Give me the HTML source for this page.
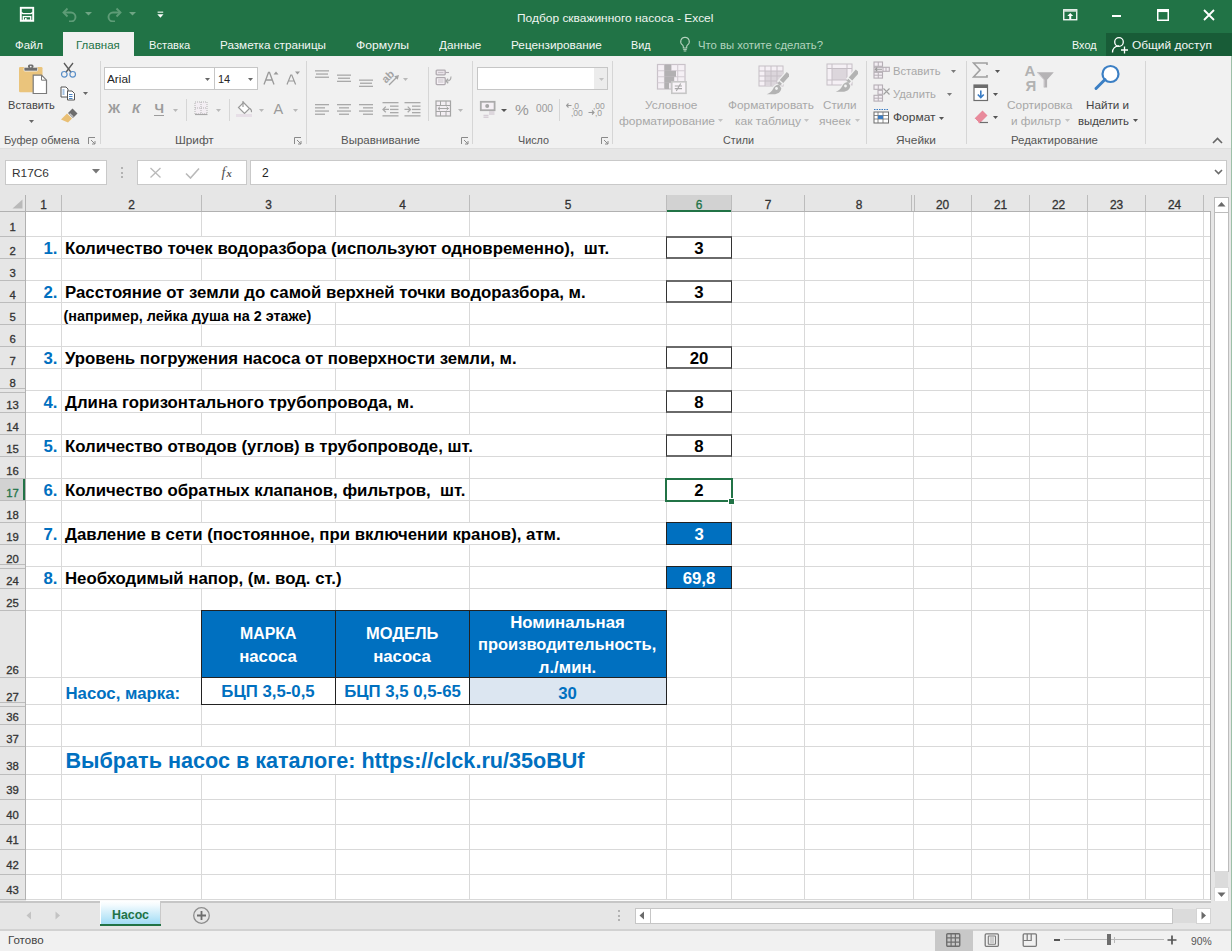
<!DOCTYPE html><html><head><meta charset="utf-8"><style>
html,body{margin:0;padding:0;}
body{width:1232px;height:951px;overflow:hidden;position:relative;font-family:"Liberation Sans",sans-serif;background:#fff;}
div,svg{box-sizing:border-box;}
</style></head><body>
<div style="position:absolute;left:0px;top:0px;width:1232px;height:56px;background:#217346"></div>
<div style="position:absolute;left:516.5px;top:18.28px;height:0;line-height:0;white-space:nowrap;font-size:11.6px;color:#f0f5f1;font-weight:normal;transform:scaleX(1.0302);transform-origin:0 0;">Подбор скважинного насоса - Excel</div>
<svg style="position:absolute;left:19px;top:6px;" width="16" height="16" viewBox="0 0 16 16"><rect x="1.8" y="1.8" width="12.4" height="13" fill="none" stroke="#fff" stroke-width="1.9"/><path d="M2.5 6.2Q3 7.6 4.5 7.6H11.5Q13 7.6 13.5 6.2" fill="none" stroke="#fff" stroke-width="1.4"/><rect x="4.3" y="10.6" width="7.4" height="3.6" fill="none" stroke="#fff" stroke-width="1.3"/><rect x="6" y="12" width="1.6" height="2.5" fill="#fff"/></svg>
<svg style="position:absolute;left:61px;top:6px;" width="18" height="16" viewBox="0 0 18 16"><path d="M3 6.5h7a4.5 4.5 0 0 1 0 9h-2" fill="none" stroke="#5e9c77" stroke-width="1.9"/><path d="M6.5 2.5l-4 4 4 4" fill="none" stroke="#5e9c77" stroke-width="1.9"/></svg>
<svg style="position:absolute;left:85px;top:12px;" width="7" height="4" viewBox="0 0 7 4"><path d="M0 0h7l-3.5 3.5z" fill="#6fa584"/></svg>
<svg style="position:absolute;left:105px;top:6px;" width="18" height="16" viewBox="0 0 18 16"><path d="M15 6.5h-7a4.5 4.5 0 0 0 0 9h2" fill="none" stroke="#5e9c77" stroke-width="1.9"/><path d="M11.5 2.5l4 4-4 4" fill="none" stroke="#5e9c77" stroke-width="1.9"/></svg>
<svg style="position:absolute;left:129px;top:12px;" width="7" height="4" viewBox="0 0 7 4"><path d="M0 0h7l-3.5 3.5z" fill="#6fa584"/></svg>
<svg style="position:absolute;left:157px;top:10.5px;" width="7" height="8" viewBox="0 0 7 8"><rect x="0.6" y="0.5" width="5.6" height="1.4" fill="#c7dfcf"/><path d="M0.3 3.3h6.2L3.4 6.8z" fill="#fff"/></svg>
<svg style="position:absolute;left:1063px;top:9px;" width="15" height="12" viewBox="0 0 15 12"><rect x="0.75" y="0.75" width="13" height="10" fill="none" stroke="#fff" stroke-width="1.3"/><rect x="0.75" y="0.75" width="13" height="2" fill="#cfe0d5"/><path d="M7.25 4l-3 3h2v3.5h2V7h2z" fill="#fff"/></svg>
<div style="position:absolute;left:1112px;top:15px;width:9px;height:2px;background:#fff"></div>
<svg style="position:absolute;left:1157px;top:9px;" width="12" height="12" viewBox="0 0 12 12"><rect x="0.75" y="0.75" width="10.5" height="10.5" fill="none" stroke="#fff" stroke-width="1.5"/><rect x="0.75" y="0.75" width="10.5" height="2.3" fill="#fff"/></svg>
<svg style="position:absolute;left:1203px;top:9px;" width="12" height="12" viewBox="0 0 12 12"><path d="M1 1L11 11M11 1L1 11" stroke="#fff" stroke-width="1.8"/></svg>
<div style="position:absolute;left:63px;top:32px;width:71px;height:25px;background:#f1f1f1"></div>
<div style="position:absolute;left:15px;top:44.51px;height:0;line-height:0;white-space:nowrap;font-size:11.8px;color:#f4f8f5;font-weight:normal;transform:scaleX(0.9652);transform-origin:0 0;">Файл</div>
<div style="position:absolute;left:75.6px;top:44.51px;height:0;line-height:0;white-space:nowrap;font-size:11.8px;color:#217346;font-weight:normal;transform:scaleX(0.9752);transform-origin:0 0;">Главная</div>
<div style="position:absolute;left:148.75px;top:44.51px;height:0;line-height:0;white-space:nowrap;font-size:11.8px;color:#f4f8f5;font-weight:normal;transform:scaleX(0.9406);transform-origin:0 0;">Вставка</div>
<div style="position:absolute;left:220px;top:44.51px;height:0;line-height:0;white-space:nowrap;font-size:11.8px;color:#f4f8f5;font-weight:normal;transform:scaleX(0.9902);transform-origin:0 0;">Разметка страницы</div>
<div style="position:absolute;left:356px;top:44.51px;height:0;line-height:0;white-space:nowrap;font-size:11.8px;color:#f4f8f5;font-weight:normal;transform:scaleX(1.0322);transform-origin:0 0;">Формулы</div>
<div style="position:absolute;left:438.75px;top:44.51px;height:0;line-height:0;white-space:nowrap;font-size:11.8px;color:#f4f8f5;font-weight:normal;transform:scaleX(0.9911);transform-origin:0 0;">Данные</div>
<div style="position:absolute;left:511px;top:44.51px;height:0;line-height:0;white-space:nowrap;font-size:11.8px;color:#f4f8f5;font-weight:normal;transform:scaleX(0.9977);transform-origin:0 0;">Рецензирование</div>
<div style="position:absolute;left:631px;top:44.51px;height:0;line-height:0;white-space:nowrap;font-size:11.8px;color:#f4f8f5;font-weight:normal;transform:scaleX(0.9135);transform-origin:0 0;">Вид</div>
<svg style="position:absolute;left:679px;top:36px;" width="12" height="16" viewBox="0 0 12 16"><path d="M6 1.2a4.3 4.3 0 0 0-2.6 7.7c.6.5.9 1.1.9 1.8v1.3h3.4v-1.3c0-.7.3-1.3.9-1.8A4.3 4.3 0 0 0 6 1.2z" fill="none" stroke="#b5d3bf" stroke-width="1.1"/><path d="M4.2 13.6h3.6M4.7 15h2.6" stroke="#b5d3bf" stroke-width="1"/></svg>
<div style="position:absolute;left:697.5px;top:44.51px;height:0;line-height:0;white-space:nowrap;font-size:11.8px;color:#b3d3be;font-weight:normal;transform:scaleX(0.9583);transform-origin:0 0;">Что вы хотите сделать?</div>
<div style="position:absolute;left:1071.5px;top:44.51px;height:0;line-height:0;white-space:nowrap;font-size:11.8px;color:#f4f8f5;font-weight:normal;transform:scaleX(0.9179);transform-origin:0 0;">Вход</div>
<div style="position:absolute;left:1106px;top:33px;width:126px;height:23px;background:#185c37"></div>
<svg style="position:absolute;left:1111px;top:36px;" width="19" height="18" viewBox="0 0 19 18"><circle cx="8" cy="6" r="4.3" fill="none" stroke="#fff" stroke-width="1.3"/><path d="M1.5 16.5c0-4 2.8-6.5 6.5-6.5" fill="none" stroke="#fff" stroke-width="1.3"/><path d="M13.5 10.5v7M10 14h7" stroke="#fff" stroke-width="1.3"/></svg>
<div style="position:absolute;left:1132px;top:44.51px;height:0;line-height:0;white-space:nowrap;font-size:11.8px;color:#f4f8f5;font-weight:normal;transform:scaleX(1.0091);transform-origin:0 0;">Общий доступ</div>
<div style="position:absolute;left:0px;top:56px;width:1232px;height:93px;background:#f1f1f1;border-bottom:1px solid #dedede"></div>
<svg style="position:absolute;left:18px;top:63px;" width="30" height="32" viewBox="0 0 30 32"><rect x="1" y="4" width="23.5" height="25.3" rx="1.2" fill="#eac47c"/><rect x="6" y="4.3" width="13.6" height="3.8" rx="1" fill="#6d6d6d" stroke="#f1f1f1" stroke-width="0.8"/><rect x="10" y="1.5" width="5.5" height="3.5" rx="1.5" fill="#6d6d6d"/><circle cx="12.75" cy="3.6" r="0.9" fill="#f1f1f1"/><path d="M15.2 12.2h8.3l5 5v13.3h-13.3z" fill="#fff" stroke="#7a7a7a" stroke-width="1.2"/><path d="M23.5 12.2v5h5" fill="none" stroke="#7a7a7a" stroke-width="1"/></svg>
<div style="position:absolute;left:7.5px;top:104.98px;height:0;line-height:0;white-space:nowrap;font-size:11.6px;color:#444444;font-weight:normal;transform:scaleX(0.9539);transform-origin:0 0;">Вставить</div>
<svg style="position:absolute;left:29px;top:120px;" width="5" height="3" viewBox="0 0 5 3"><path d="M0 0h5l-2.5 3z" fill="#676767"/></svg>
<svg style="position:absolute;left:60px;top:62px;" width="17" height="16" viewBox="0 0 17 16"><path d="M4 1l7.2 9.5M13 1L5.8 10.5" stroke="#5a5a5a" stroke-width="1.3"/><circle cx="4.3" cy="12.3" r="2.8" fill="none" stroke="#5a8fc8" stroke-width="1.2"/><circle cx="12.7" cy="12.3" r="2.8" fill="none" stroke="#5a8fc8" stroke-width="1.2"/></svg>
<svg style="position:absolute;left:60px;top:86px;" width="17" height="15" viewBox="0 0 17 15"><path d="M1 1h5l2 2v8H1z" fill="#fff" stroke="#555" stroke-width="1"/><path d="M7.5 5h4.5l2.5 2.5v6.5h-7z" fill="#fff" stroke="#555" stroke-width="1"/><path d="M2.5 4h2M2.5 6h2M2.5 8h2M9 8.5h3.5M9 10.5h3.5M9 12.5h3.5" stroke="#4a84c4" stroke-width="1"/></svg>
<svg style="position:absolute;left:83px;top:92px;" width="5" height="3" viewBox="0 0 5 3"><path d="M0 0h5l-2.5 3z" fill="#676767"/></svg>
<svg style="position:absolute;left:60px;top:108px;" width="18" height="16" viewBox="0 0 18 16"><path d="M1 11.5l6-6 5 5-4 4z" fill="#e9bf74"/><path d="M8 5l4.5-4.5 5 5L13 10z" fill="#6d6d6d"/><path d="M9.8 5.5l3.7 3.5" stroke="#f1f1f1" stroke-width="1"/></svg>
<div style="position:absolute;left:3.5px;top:140.08px;height:0;line-height:0;white-space:nowrap;font-size:11.6px;color:#555555;font-weight:normal;transform:scaleX(0.9579);transform-origin:0 0;">Буфер обмена</div>
<svg style="position:absolute;left:87.5px;top:137px;" width="8" height="8" viewBox="0 0 8 8"><path d="M0.5 7V0.5H7" fill="none" stroke="#8a8a8a" stroke-width="1"/><path d="M3 3l4 4M7 4v3H4" fill="none" stroke="#8a8a8a" stroke-width="1"/></svg>
<div style="position:absolute;left:100px;top:61px;width:1px;height:83px;background:#d6d6d6"></div>
<div style="position:absolute;left:104px;top:67px;width:111px;height:23px;background:#fff;border:1px solid #c6c6c6"></div>
<div style="position:absolute;left:214px;top:67px;width:44px;height:23px;background:#fff;border:1px solid #c6c6c6"></div>
<div style="position:absolute;left:107px;top:78.98px;height:0;line-height:0;white-space:nowrap;font-size:11.6px;color:#262626;font-weight:normal;transform:scaleX(1.0170);transform-origin:0 0;">Arial</div>
<svg style="position:absolute;left:205px;top:78px;" width="5" height="3" viewBox="0 0 5 3"><path d="M0 0h5l-2.5 3z" fill="#676767"/></svg>
<div style="position:absolute;left:218px;top:79.20px;height:0;line-height:0;white-space:nowrap;font-size:10.97px;color:#262626;font-weight:normal;">14</div>
<svg style="position:absolute;left:247.5px;top:78px;" width="5" height="3" viewBox="0 0 5 3"><path d="M0 0h5l-2.5 3z" fill="#676767"/></svg>
<svg style="position:absolute;left:263px;top:70px;" width="16" height="16" viewBox="0 0 16 16"><path d="M1 14.5L5.5 2.5h1L11 14.5M3 10h6" fill="none" stroke="#9a9a9a" stroke-width="1.3"/><path d="M10.5 4.5l2.5-3 2.5 3z" fill="#9a9a9a"/></svg>
<svg style="position:absolute;left:286px;top:70px;" width="15" height="16" viewBox="0 0 15 16"><path d="M1 14.5L4.8 5h1L9.6 14.5M2.6 11h5.6" fill="none" stroke="#9a9a9a" stroke-width="1.2"/><path d="M9 1.5h5l-2.5 3z" fill="#9a9a9a"/></svg>
<div style="position:absolute;left:108px;top:108.82px;height:0;line-height:0;white-space:nowrap;font-size:13.5px;color:#9c9c9c;font-weight:bold;">Ж</div>
<div style="position:absolute;left:132px;top:108.82px;height:0;line-height:0;white-space:nowrap;font-size:13.5px;color:#9c9c9c;font-weight:bold;font-style:italic">К</div>
<div style="position:absolute;left:154.5px;top:108.82px;height:0;line-height:0;white-space:nowrap;font-size:13.5px;color:#9c9c9c;font-weight:bold;">Ч</div>
<div style="position:absolute;left:154px;top:115px;width:10px;height:1px;background:#9c9c9c"></div>
<svg style="position:absolute;left:172.5px;top:109px;" width="5" height="3" viewBox="0 0 5 3"><path d="M0 0h5l-2.5 3z" fill="#b9b9b9"/></svg>
<div style="position:absolute;left:186px;top:99px;width:1px;height:22px;background:#d6d6d6"></div>
<svg style="position:absolute;left:194px;top:101px;" width="15" height="15" viewBox="0 0 15 15"><rect x="1" y="1" width="12" height="12" fill="#f3eef3" stroke="#b3b3b3" stroke-width="1" stroke-dasharray="1 1"/><path d="M7 1v12M1 7h12" stroke="#b3b3b3" stroke-width="1" stroke-dasharray="1 1"/><path d="M1 13.5h12.5" stroke="#a8a8a8" stroke-width="1.2"/></svg>
<svg style="position:absolute;left:215.5px;top:109px;" width="5" height="3" viewBox="0 0 5 3"><path d="M0 0h5l-2.5 3z" fill="#b9b9b9"/></svg>
<div style="position:absolute;left:229px;top:99px;width:1px;height:22px;background:#d6d6d6"></div>
<svg style="position:absolute;left:236px;top:100px;" width="18" height="18" viewBox="0 0 18 18"><path d="M7.5 2.5l6 6-5 5-6-6z" fill="#fff" stroke="#9a9a9a" stroke-width="1.2"/><path d="M7 1v6" stroke="#9a9a9a" stroke-width="1.2"/><path d="M14 8.5c1.5 1.5 2 3 1 3.5" fill="none" stroke="#9a9a9a" stroke-width="1.2"/><rect x="0" y="14" width="16" height="3" fill="#e7dfe7"/></svg>
<svg style="position:absolute;left:259px;top:109px;" width="5" height="3" viewBox="0 0 5 3"><path d="M0 0h5l-2.5 3z" fill="#b9b9b9"/></svg>
<div style="position:absolute;left:273.5px;top:109.48px;height:0;line-height:0;white-space:nowrap;font-size:14.5px;color:#9a9a9a;font-weight:normal;">A</div>
<svg style="position:absolute;left:292.5px;top:109px;" width="5" height="3" viewBox="0 0 5 3"><path d="M0 0h5l-2.5 3z" fill="#b9b9b9"/></svg>
<div style="position:absolute;left:175px;top:140.08px;height:0;line-height:0;white-space:nowrap;font-size:11.6px;color:#555555;font-weight:normal;transform:scaleX(1.0154);transform-origin:0 0;">Шрифт</div>
<svg style="position:absolute;left:294px;top:137px;" width="8" height="8" viewBox="0 0 8 8"><path d="M0.5 7V0.5H7" fill="none" stroke="#8a8a8a" stroke-width="1"/><path d="M3 3l4 4M7 4v3H4" fill="none" stroke="#8a8a8a" stroke-width="1"/></svg>
<div style="position:absolute;left:306px;top:61px;width:1px;height:83px;background:#d6d6d6"></div>
<svg style="position:absolute;left:314.5px;top:0px;" width="20" height="130" viewBox="0 0 20 130"><rect x="0" y="70.2" width="14" height="1.3" fill="#a9a9a9"/><rect x="1" y="73.4" width="12" height="1.3" fill="#a9a9a9"/><rect x="0" y="76.6" width="14" height="1.3" fill="#a9a9a9"/></svg>
<svg style="position:absolute;left:336.5px;top:0px;" width="20" height="130" viewBox="0 0 20 130"><rect x="0" y="74.5" width="14" height="1.3" fill="#a9a9a9"/><rect x="1" y="77.6" width="12" height="1.3" fill="#a9a9a9"/><rect x="0" y="80.7" width="14" height="1.3" fill="#a9a9a9"/></svg>
<svg style="position:absolute;left:358.5px;top:0px;" width="20" height="130" viewBox="0 0 20 130"><rect x="0" y="79.5" width="14" height="1.3" fill="#a9a9a9"/><rect x="1" y="82.6" width="12" height="1.3" fill="#a9a9a9"/><rect x="0" y="85.7" width="14" height="1.3" fill="#a9a9a9"/></svg>
<svg style="position:absolute;left:381px;top:68px;" width="22" height="20" viewBox="0 0 22 20"><text x="0" y="12" font-size="11" font-weight="bold" fill="#a3a3a3" transform="rotate(-45 7 8)" font-family="Liberation Sans">ab</text><path d="M8 17L16 9" stroke="#a3a3a3" stroke-width="1.3"/><path d="M18 7L13.2 8.3L16.7 11.8z" fill="#a3a3a3"/></svg>
<svg style="position:absolute;left:402.5px;top:78px;" width="5" height="3" viewBox="0 0 5 3"><path d="M0 0h5l-2.5 3z" fill="#b9b9b9"/></svg>
<div style="position:absolute;left:428px;top:67px;width:1px;height:54px;background:#d6d6d6"></div>
<svg style="position:absolute;left:435px;top:69px;" width="18" height="17" viewBox="0 0 18 17"><rect x="1.2" y="1.2" width="9" height="4.6" rx="0.8" fill="#ece6ec" stroke="#b0aab0" stroke-width="1.3"/><path d="M3 3.5h5.5" stroke="#c8c2c8" stroke-width="1.2"/><path d="M10.5 3.5h3.5" stroke="#b0aab0" stroke-width="1.1"/><rect x="1.2" y="8.6" width="9" height="7" rx="0.8" fill="#f5f0f5" stroke="#b0aab0" stroke-width="1.3"/><path d="M3 11h5.5M3 13h5.5" stroke="#c8c2c8" stroke-width="1.1"/><path d="M16 7.5c0 3-1.5 4.5-4 4.5" fill="none" stroke="#a8a8a8" stroke-width="1.1"/><path d="M13.2 9.8L11 12l2.2 2.2" fill="none" stroke="#a8a8a8" stroke-width="1.3"/></svg>
<svg style="position:absolute;left:314.5px;top:0px;" width="20" height="130" viewBox="0 0 20 130"><rect x="0" y="104" width="14" height="1.3" fill="#a9a9a9"/><rect x="0" y="107.2" width="10" height="1.3" fill="#a9a9a9"/><rect x="0" y="110.4" width="14" height="1.3" fill="#a9a9a9"/><rect x="0" y="113.6" width="10" height="1.3" fill="#a9a9a9"/></svg>
<svg style="position:absolute;left:336.5px;top:0px;" width="20" height="130" viewBox="0 0 20 130"><rect x="0" y="104" width="14" height="1.3" fill="#a9a9a9"/><rect x="2" y="107.2" width="10" height="1.3" fill="#a9a9a9"/><rect x="0" y="110.4" width="14" height="1.3" fill="#a9a9a9"/><rect x="2" y="113.6" width="10" height="1.3" fill="#a9a9a9"/></svg>
<svg style="position:absolute;left:358.5px;top:0px;" width="20" height="130" viewBox="0 0 20 130"><rect x="0" y="104" width="14" height="1.3" fill="#a9a9a9"/><rect x="4" y="107.2" width="10" height="1.3" fill="#a9a9a9"/><rect x="0" y="110.4" width="14" height="1.3" fill="#a9a9a9"/><rect x="4" y="113.6" width="10" height="1.3" fill="#a9a9a9"/></svg>
<svg style="position:absolute;left:382px;top:101px;" width="18" height="16" viewBox="0 0 18 16"><rect x="0.5" y="1" width="16" height="1.3" fill="#a9a9a9"/><rect x="8" y="4.5" width="8.5" height="1.3" fill="#a9a9a9"/><rect x="8" y="7.8" width="8.5" height="1.3" fill="#a9a9a9"/><rect x="8" y="11" width="8.5" height="1.3" fill="#a9a9a9"/><rect x="0.5" y="14.2" width="16" height="1.3" fill="#a9a9a9"/><path d="M1 8.4h6M3.8 5.6L1 8.4l2.8 2.8" fill="none" stroke="#a9a9a9" stroke-width="1.3"/></svg>
<svg style="position:absolute;left:404px;top:101px;" width="18" height="16" viewBox="0 0 18 16"><rect x="0.5" y="1" width="16" height="1.3" fill="#a9a9a9"/><rect x="8" y="4.5" width="8.5" height="1.3" fill="#a9a9a9"/><rect x="8" y="7.8" width="8.5" height="1.3" fill="#a9a9a9"/><rect x="8" y="11" width="8.5" height="1.3" fill="#a9a9a9"/><rect x="0.5" y="14.2" width="16" height="1.3" fill="#a9a9a9"/><path d="M0.5 8.4h6M3.7 5.6l2.8 2.8-2.8 2.8" fill="none" stroke="#a9a9a9" stroke-width="1.3"/></svg>
<svg style="position:absolute;left:435px;top:100px;" width="17" height="18" viewBox="0 0 17 18"><rect x="1" y="1" width="14.5" height="15" fill="#f3eef3" stroke="#a5a5a5" stroke-width="1.2"/><path d="M1 5.5h14.5M1 11.5h14.5M5.5 1v4.5M11 1v4.5M5.5 11.5V16M11 11.5V16" stroke="#a5a5a5" stroke-width="1"/><path d="M3 8.5h10.5M5 6.8L3 8.5l2 1.7M11.5 6.8l2 1.7-2 1.7" fill="none" stroke="#a5a5a5" stroke-width="1"/></svg>
<svg style="position:absolute;left:457.5px;top:109px;" width="5" height="3" viewBox="0 0 5 3"><path d="M0 0h5l-2.5 3z" fill="#b9b9b9"/></svg>
<div style="position:absolute;left:341px;top:140.08px;height:0;line-height:0;white-space:nowrap;font-size:11.6px;color:#555555;font-weight:normal;transform:scaleX(0.9894);transform-origin:0 0;">Выравнивание</div>
<svg style="position:absolute;left:460.5px;top:137px;" width="8" height="8" viewBox="0 0 8 8"><path d="M0.5 7V0.5H7" fill="none" stroke="#8a8a8a" stroke-width="1"/><path d="M3 3l4 4M7 4v3H4" fill="none" stroke="#8a8a8a" stroke-width="1"/></svg>
<div style="position:absolute;left:472px;top:61px;width:1px;height:83px;background:#d6d6d6"></div>
<div style="position:absolute;left:477px;top:67px;width:131px;height:23px;background:#fff;border:1px solid #c6c6c6"></div>
<div style="position:absolute;left:594px;top:68px;width:13px;height:21px;background:#ececec"></div>
<svg style="position:absolute;left:598.5px;top:78px;" width="5" height="3" viewBox="0 0 5 3"><path d="M0 0h5l-2.5 3z" fill="#c3c3c3"/></svg>
<svg style="position:absolute;left:479px;top:100px;" width="18" height="18" viewBox="0 0 18 18"><rect x="1.8" y="1.8" width="13.8" height="8.4" fill="#f5f0f5" stroke="#ababab" stroke-width="1.8"/><circle cx="8.2" cy="6" r="2" fill="#a5a5a5"/><path d="M10 12h5.5M10 14h5.5M4.5 15.5h5M4.5 17.5h5" stroke="#d6ced6" stroke-width="1.4"/></svg>
<svg style="position:absolute;left:501px;top:109px;" width="6" height="3" viewBox="0 0 6 3"><path d="M0 0h6l-3.0 3z" fill="#555"/></svg>
<div style="position:absolute;left:515px;top:110.13px;height:0;line-height:0;white-space:nowrap;font-size:15.5px;color:#9a9a9a;font-weight:normal;">%</div>
<div style="position:absolute;left:536px;top:108.67px;height:0;line-height:0;white-space:nowrap;font-size:10.2px;color:#9a9a9a;font-weight:normal;">000</div>
<div style="position:absolute;left:559px;top:99px;width:1px;height:22px;background:#d6d6d6"></div>
<svg style="position:absolute;left:566px;top:101px;" width="17" height="17" viewBox="0 0 17 17"><text x="6" y="7.5" font-size="8.5" fill="#9a9a9a" font-family="Liberation Sans">,0</text><text x="5" y="14.5" font-size="8.5" fill="#9a9a9a" font-family="Liberation Sans">,00</text><path d="M0.5 4.5h5M2.5 2.5l-2 2 2 2" fill="none" stroke="#9a9a9a" stroke-width="1.1"/></svg>
<svg style="position:absolute;left:588px;top:101px;" width="17" height="17" viewBox="0 0 17 17"><text x="5" y="7.5" font-size="8.5" fill="#9a9a9a" font-family="Liberation Sans">,00</text><text x="7" y="14.5" font-size="8.5" fill="#9a9a9a" font-family="Liberation Sans">,0</text><path d="M0.5 11.5h5.5M4 9.5l2 2-2 2" fill="none" stroke="#9a9a9a" stroke-width="1.1"/></svg>
<div style="position:absolute;left:518px;top:140.08px;height:0;line-height:0;white-space:nowrap;font-size:11.6px;color:#555555;font-weight:normal;transform:scaleX(0.9292);transform-origin:0 0;">Число</div>
<svg style="position:absolute;left:600.5px;top:137px;" width="8" height="8" viewBox="0 0 8 8"><path d="M0.5 7V0.5H7" fill="none" stroke="#8a8a8a" stroke-width="1"/><path d="M3 3l4 4M7 4v3H4" fill="none" stroke="#8a8a8a" stroke-width="1"/></svg>
<div style="position:absolute;left:612px;top:61px;width:1px;height:83px;background:#d6d6d6"></div>
<svg style="position:absolute;left:656px;top:63px;" width="32" height="32" viewBox="0 0 32 32"><rect x="1.5" y="1.5" width="27.5" height="24.5" fill="#f5f0f5" stroke="#c9c2c9" stroke-width="1.2"/><path d="M1.5 7.8h27.5M1.5 13.7h27.5M1.5 19.8h27.5M8.5 1.5v24.5M15.1 1.5v24.5M21.7 1.5v24.5" stroke="#d3ccd3" stroke-width="1.1"/><g fill="#b2b0b2"><rect x="8.5" y="1.5" width="6.6" height="6.3"/><rect x="8.5" y="7.8" width="11.5" height="5.9"/><rect x="8.5" y="13.7" width="9.7" height="6.1"/><rect x="8.5" y="19.8" width="4.6" height="6.2"/></g><rect x="15.8" y="18.8" width="14.2" height="11.5" fill="#f8f4f8" stroke="#c6c6c6" stroke-width="1.6"/><path d="M18.8 23h7.2M18.8 25.6h7.2M24.7 20.5l-4.4 7.5" stroke="#a8a8a8" stroke-width="1.1"/></svg>
<div style="position:absolute;left:645px;top:104.98px;height:0;line-height:0;white-space:nowrap;font-size:11.6px;color:#a8a8a8;font-weight:normal;transform:scaleX(1.0251);transform-origin:0 0;">Условное</div>
<div style="position:absolute;left:619px;top:120.98px;height:0;line-height:0;white-space:nowrap;font-size:11.6px;color:#a8a8a8;font-weight:normal;transform:scaleX(1.0308);transform-origin:0 0;">форматирование</div>
<svg style="position:absolute;left:718px;top:119px;" width="5" height="3" viewBox="0 0 5 3"><path d="M0 0h5l-2.5 3z" fill="#c3c3c3"/></svg>
<svg style="position:absolute;left:758px;top:65px;" width="31" height="31" viewBox="0 0 31 31"><rect x="1" y="1" width="24" height="20" fill="#f5f0f5" stroke="#c6bfc6" stroke-width="1"/><rect x="7" y="6" width="18" height="15" fill="#dcd6dc"/><path d="M1 6h24M1 11h24M1 16h24M7 1v20M13 1v20M19 1v20" stroke="#c6bfc6" stroke-width="1"/><g transform="translate(17 11)"><path d="M13.5 -2.5L4.5 7.5" stroke="#f1f1f1" stroke-width="7"/><path d="M4 8.5c-3.2 0-5 2.2-6 4.5-1 2.2-3 4-6.3 5.3h7c4.2 0 7.3-2.3 7.6-6z" fill="#b3b3b3" stroke="#f1f1f1" stroke-width="2"/><path d="M13.5 -2.5L6.5 5.5" stroke="#b3b3b3" stroke-width="4.6"/><path d="M5.6 6.5L3.8 8.4" stroke="#b3b3b3" stroke-width="3.6"/><path d="M4 8.5c-3.2 0-5 2.2-6 4.5-1 2.2-3 4-6.3 5.3h7c4.2 0 7.3-2.3 7.6-6z" fill="#b3b3b3"/><circle cx="1.5" cy="12.5" r="1.4" fill="#f3f3f3"/></g></svg>
<div style="position:absolute;left:728px;top:104.98px;height:0;line-height:0;white-space:nowrap;font-size:11.6px;color:#a8a8a8;font-weight:normal;transform:scaleX(1.0218);transform-origin:0 0;">Форматировать</div>
<div style="position:absolute;left:735px;top:120.98px;height:0;line-height:0;white-space:nowrap;font-size:11.6px;color:#a8a8a8;font-weight:normal;transform:scaleX(1.0389);transform-origin:0 0;">как таблицу</div>
<svg style="position:absolute;left:804px;top:119px;" width="5" height="3" viewBox="0 0 5 3"><path d="M0 0h5l-2.5 3z" fill="#c3c3c3"/></svg>
<svg style="position:absolute;left:826px;top:63px;" width="32" height="31" viewBox="0 0 32 31"><rect x="1" y="1" width="25" height="21" fill="#f5f0f5" stroke="#c6bfc6" stroke-width="1"/><rect x="6" y="6" width="15" height="11" fill="#dcd6dc"/><path d="M1 5.5h25M1 17h25M6 1v21M21 1v21" stroke="#c6bfc6" stroke-width="1"/><g transform="translate(18 10.5)"><path d="M13.5 -2.5L4.5 7.5" stroke="#f1f1f1" stroke-width="7"/><path d="M4 8.5c-3.2 0-5 2.2-6 4.5-1 2.2-3 4-6.3 5.3h7c4.2 0 7.3-2.3 7.6-6z" fill="#b3b3b3" stroke="#f1f1f1" stroke-width="2"/><path d="M13.5 -2.5L6.5 5.5" stroke="#b3b3b3" stroke-width="4.6"/><path d="M5.6 6.5L3.8 8.4" stroke="#b3b3b3" stroke-width="3.6"/><path d="M4 8.5c-3.2 0-5 2.2-6 4.5-1 2.2-3 4-6.3 5.3h7c4.2 0 7.3-2.3 7.6-6z" fill="#b3b3b3"/><circle cx="1.5" cy="12.5" r="1.4" fill="#f3f3f3"/></g></svg>
<div style="position:absolute;left:823px;top:104.98px;height:0;line-height:0;white-space:nowrap;font-size:11.6px;color:#a8a8a8;font-weight:normal;transform:scaleX(1.0025);transform-origin:0 0;">Стили</div>
<div style="position:absolute;left:819px;top:120.98px;height:0;line-height:0;white-space:nowrap;font-size:11.6px;color:#a8a8a8;font-weight:normal;transform:scaleX(1.0396);transform-origin:0 0;">ячеек</div>
<svg style="position:absolute;left:855px;top:119px;" width="5" height="3" viewBox="0 0 5 3"><path d="M0 0h5l-2.5 3z" fill="#c3c3c3"/></svg>
<div style="position:absolute;left:723px;top:140.08px;height:0;line-height:0;white-space:nowrap;font-size:11.6px;color:#555555;font-weight:normal;transform:scaleX(0.9277);transform-origin:0 0;">Стили</div>
<div style="position:absolute;left:866px;top:61px;width:1px;height:83px;background:#d6d6d6"></div>
<svg style="position:absolute;left:873px;top:61px;" width="18" height="18" viewBox="0 0 18 18"><g fill="#f3eef3" stroke="#b5aeb5" stroke-width="1.1"><rect x="1" y="1" width="8.5" height="4.3"/><rect x="1" y="6.3" width="15.3" height="4"/><rect x="1" y="11.3" width="8.5" height="5.8"/></g><path d="M5.25 1v4.3M5.25 11.3v5.8M1 14.2h8.5M10 6.3v4M13 6.3v4" stroke="#b5aeb5" stroke-width="1"/><path d="M9 8.3H2.2M4.2 6.6L2.2 8.3l2 1.7" fill="none" stroke="#9a9a9a" stroke-width="1.1"/></svg>
<div style="position:absolute;left:893px;top:71.38px;height:0;line-height:0;white-space:nowrap;font-size:11.6px;color:#a8a8a8;font-weight:normal;transform:scaleX(0.9681);transform-origin:0 0;">Вставить</div>
<svg style="position:absolute;left:950.5px;top:70px;" width="5" height="3" viewBox="0 0 5 3"><path d="M0 0h5l-2.5 3z" fill="#7a7a7a"/></svg>
<svg style="position:absolute;left:873px;top:84px;" width="18" height="18" viewBox="0 0 18 18"><g fill="#f3eef3" stroke="#b5aeb5" stroke-width="1.1"><rect x="1" y="1" width="8.5" height="4.3"/><rect x="5" y="6.3" width="4.5" height="4"/><rect x="1" y="11.3" width="8.5" height="5.8"/></g><path d="M5.25 1v4.3M5.25 11.3v5.8M1 14.2h8.5" stroke="#b5aeb5" stroke-width="1"/><path d="M10.5 4.5l6 6M16.5 4.5l-6 6" stroke="#a0a0a0" stroke-width="1.1"/></svg>
<div style="position:absolute;left:893px;top:93.98px;height:0;line-height:0;white-space:nowrap;font-size:11.6px;color:#a8a8a8;font-weight:normal;transform:scaleX(0.9710);transform-origin:0 0;">Удалить</div>
<svg style="position:absolute;left:947px;top:93px;" width="5" height="3" viewBox="0 0 5 3"><path d="M0 0h5l-2.5 3z" fill="#7a7a7a"/></svg>
<svg style="position:absolute;left:873px;top:107px;" width="17" height="18" viewBox="0 0 17 18"><path d="M1 2.5h14" stroke="#3a7cc4" stroke-width="1" stroke-dasharray="1.5 1"/><rect x="1" y="5" width="14.5" height="11" fill="#fff" stroke="#6d6d6d" stroke-width="1"/><path d="M1 8.5h14.5M1 12h14.5M5 5v11M10 5v11" stroke="#6d6d6d" stroke-width="0.8"/><rect x="5" y="8.5" width="5" height="3.5" fill="#3a7cc4"/></svg>
<div style="position:absolute;left:893px;top:116.98px;height:0;line-height:0;white-space:nowrap;font-size:11.6px;color:#444444;font-weight:normal;transform:scaleX(1.0339);transform-origin:0 0;">Формат</div>
<svg style="position:absolute;left:939px;top:116.5px;" width="5" height="3" viewBox="0 0 5 3"><path d="M0 0h5l-2.5 3z" fill="#555"/></svg>
<div style="position:absolute;left:895.5px;top:140.08px;height:0;line-height:0;white-space:nowrap;font-size:11.6px;color:#555555;font-weight:normal;transform:scaleX(1.0281);transform-origin:0 0;">Ячейки</div>
<div style="position:absolute;left:965.5px;top:61px;width:1px;height:83px;background:#d6d6d6"></div>
<svg style="position:absolute;left:972px;top:62px;" width="17" height="16" viewBox="0 0 17 16"><path d="M15 3V1H1.5L8 8l-6.5 7H15v-2" fill="none" stroke="#a0a0a0" stroke-width="1.6"/></svg>
<svg style="position:absolute;left:995px;top:70px;" width="5" height="3" viewBox="0 0 5 3"><path d="M0 0h5l-2.5 3z" fill="#555"/></svg>
<svg style="position:absolute;left:973px;top:84px;" width="16" height="18" viewBox="0 0 16 18"><rect x="1" y="1" width="13.5" height="15.5" fill="#fff" stroke="#6d6d6d" stroke-width="1.2"/><rect x="1" y="1" width="13.5" height="3" fill="#6d6d6d"/><path d="M7.8 6.5v7M4.8 10.5l3 3 3-3" fill="none" stroke="#3a7cc4" stroke-width="1.6"/></svg>
<svg style="position:absolute;left:993px;top:93px;" width="5" height="3" viewBox="0 0 5 3"><path d="M0 0h5l-2.5 3z" fill="#555"/></svg>
<svg style="position:absolute;left:973px;top:109px;" width="16" height="15" viewBox="0 0 16 15"><path d="M1.5 9.5l8-8 5 5-8 8z" fill="#e88a9b"/><path d="M1.5 9.5l3.5 3.5" stroke="#f1f1f1" stroke-width="1"/><path d="M7 13.5h8" stroke="#6d6d6d" stroke-width="1.2"/></svg>
<svg style="position:absolute;left:993px;top:116px;" width="5" height="3" viewBox="0 0 5 3"><path d="M0 0h5l-2.5 3z" fill="#555"/></svg>
<svg style="position:absolute;left:1024px;top:63px;" width="32" height="30" viewBox="0 0 32 30"><text x="0.5" y="12.8" font-size="15" font-weight="bold" fill="#b2b2b2" font-family="Liberation Sans">A</text><text x="1.5" y="27.8" font-size="15" font-weight="bold" fill="#b2b2b2" font-family="Liberation Sans">Я</text><path d="M12.8 9.2h17l-6.7 7.6v7.6h-3.4v-7.6z" fill="#b5b3b5"/><path d="M14.2 10.2l5.8 6.6v7" fill="none" stroke="#ddd8dd" stroke-width="0.9"/></svg>
<div style="position:absolute;left:1007px;top:104.98px;height:0;line-height:0;white-space:nowrap;font-size:11.6px;color:#a8a8a8;font-weight:normal;transform:scaleX(1.0289);transform-origin:0 0;">Сортировка</div>
<div style="position:absolute;left:1011px;top:120.98px;height:0;line-height:0;white-space:nowrap;font-size:11.6px;color:#a8a8a8;font-weight:normal;transform:scaleX(1.0123);transform-origin:0 0;">и фильтр</div>
<svg style="position:absolute;left:1065px;top:119px;" width="5" height="3" viewBox="0 0 5 3"><path d="M0 0h5l-2.5 3z" fill="#c3c3c3"/></svg>
<svg style="position:absolute;left:1092px;top:63px;" width="30" height="30" viewBox="0 0 30 30"><circle cx="18.5" cy="11" r="8" fill="#fff" stroke="#3b7fc4" stroke-width="2.2"/><path d="M13 16.5L4 25.5" stroke="#3b7fc4" stroke-width="3" stroke-linecap="round"/></svg>
<div style="position:absolute;left:1086px;top:104.98px;height:0;line-height:0;white-space:nowrap;font-size:11.6px;color:#444444;font-weight:normal;transform:scaleX(1.0046);transform-origin:0 0;">Найти и</div>
<div style="position:absolute;left:1078px;top:120.98px;height:0;line-height:0;white-space:nowrap;font-size:11.6px;color:#444444;font-weight:normal;transform:scaleX(0.9820);transform-origin:0 0;">выделить</div>
<svg style="position:absolute;left:1133px;top:119px;" width="5" height="3" viewBox="0 0 5 3"><path d="M0 0h5l-2.5 3z" fill="#555"/></svg>
<div style="position:absolute;left:1011px;top:140.08px;height:0;line-height:0;white-space:nowrap;font-size:11.6px;color:#555555;font-weight:normal;transform:scaleX(0.9846);transform-origin:0 0;">Редактирование</div>
<div style="position:absolute;left:1145px;top:61px;width:1px;height:83px;background:#d6d6d6"></div>
<svg style="position:absolute;left:1212px;top:137px;" width="11" height="7" viewBox="0 0 11 7"><path d="M1 6l4.5-4.5L10 6" fill="none" stroke="#666" stroke-width="1.6"/></svg>
<div style="position:absolute;left:0px;top:149px;width:1232px;height:753px;background:#e6e6e6"></div>
<div style="position:absolute;left:5px;top:160px;width:102px;height:25px;background:#fff;border:1px solid #c9c9c9"></div>
<div style="position:absolute;left:12px;top:173.38px;height:0;line-height:0;white-space:nowrap;font-size:11.6px;color:#333;font-weight:normal;transform:scaleX(1.0247);transform-origin:0 0;">R17C6</div>
<svg style="position:absolute;left:92px;top:169px;" width="8" height="5" viewBox="0 0 8 5"><path d="M0 0h8l-4 4.5z" fill="#777"/></svg>
<div style="position:absolute;left:120.5px;top:167px;width:2px;height:2px;background:#a0a0a0;border-radius:1px"></div>
<div style="position:absolute;left:120.5px;top:171.5px;width:2px;height:2px;background:#a0a0a0;border-radius:1px"></div>
<div style="position:absolute;left:120.5px;top:176px;width:2px;height:2px;background:#a0a0a0;border-radius:1px"></div>
<div style="position:absolute;left:137px;top:160px;width:110px;height:25px;background:#fff;border:1px solid #c9c9c9"></div>
<svg style="position:absolute;left:149px;top:167px;" width="13" height="11" viewBox="0 0 13 11"><path d="M1.5 1l10 9.5M11.5 1l-10 9.5" stroke="#b9b9b9" stroke-width="1.3"/></svg>
<svg style="position:absolute;left:185px;top:167px;" width="15" height="12" viewBox="0 0 15 12"><path d="M1 6.5l4.5 4.5L14 1.5" fill="none" stroke="#b9b9b9" stroke-width="1.6"/></svg>
<svg style="position:absolute;left:218px;top:163px;" width="20" height="18" viewBox="0 0 20 18"><text x="3.5" y="13.5" font-size="14.5" font-style="italic" fill="#555" font-family="Liberation Serif">f</text><text x="8.6" y="14" font-size="10.5" font-style="italic" font-weight="bold" fill="#555" font-family="Liberation Serif">x</text></svg>
<div style="position:absolute;left:250px;top:160px;width:977px;height:25px;background:#fff;border:1px solid #c9c9c9"></div>
<div style="position:absolute;left:262px;top:172.82px;height:0;line-height:0;white-space:nowrap;font-size:12.05px;color:#222;font-weight:normal;">2</div>
<svg style="position:absolute;left:1214px;top:169px;" width="9" height="6" viewBox="0 0 9 6"><path d="M1 1l3.5 3.5L8 1" fill="none" stroke="#6a6a6a" stroke-width="1.6"/></svg>
<div style="position:absolute;left:1213px;top:196px;width:1px;height:1px;"></div>
<svg style="position:absolute;left:12px;top:199px;" width="11" height="10" viewBox="0 0 11 10"><path d="M10.5 0.5V9.5H0.5z" fill="#b9b9b9"/></svg>
<div style="position:absolute;left:667px;top:195px;width:64px;height:16px;background:#d2d2d2"></div>
<div style="position:absolute;left:667px;top:210px;width:64px;height:2px;background:#217346"></div>
<div style="position:absolute;left:25px;top:195px;width:1px;height:16px;background:#bcbcbc"></div>
<div style="position:absolute;left:61px;top:195px;width:1px;height:16px;background:#bcbcbc"></div>
<div style="position:absolute;left:201px;top:195px;width:1px;height:16px;background:#bcbcbc"></div>
<div style="position:absolute;left:335px;top:195px;width:1px;height:16px;background:#bcbcbc"></div>
<div style="position:absolute;left:469px;top:195px;width:1px;height:16px;background:#bcbcbc"></div>
<div style="position:absolute;left:666px;top:195px;width:1px;height:16px;background:#bcbcbc"></div>
<div style="position:absolute;left:731px;top:195px;width:1px;height:16px;background:#bcbcbc"></div>
<div style="position:absolute;left:804px;top:195px;width:1px;height:16px;background:#bcbcbc"></div>
<div style="position:absolute;left:911px;top:195px;width:1px;height:16px;background:#bcbcbc"></div>
<div style="position:absolute;left:914px;top:195px;width:1px;height:16px;background:#bcbcbc"></div>
<div style="position:absolute;left:971px;top:195px;width:1px;height:16px;background:#bcbcbc"></div>
<div style="position:absolute;left:1029px;top:195px;width:1px;height:16px;background:#bcbcbc"></div>
<div style="position:absolute;left:1087px;top:195px;width:1px;height:16px;background:#bcbcbc"></div>
<div style="position:absolute;left:1145px;top:195px;width:1px;height:16px;background:#bcbcbc"></div>
<div style="position:absolute;left:1203px;top:195px;width:1px;height:16px;background:#bcbcbc"></div>
<div style="position:absolute;left:-256.5px;width:600px;text-align:center;top:204.68px;height:0;line-height:0;white-space:nowrap;font-size:11.9px;color:#333;font-weight:normal;-webkit-text-stroke:0.3px #333">1</div>
<div style="position:absolute;left:-168.5px;width:600px;text-align:center;top:204.68px;height:0;line-height:0;white-space:nowrap;font-size:11.9px;color:#333;font-weight:normal;-webkit-text-stroke:0.3px #333">2</div>
<div style="position:absolute;left:-31.5px;width:600px;text-align:center;top:204.68px;height:0;line-height:0;white-space:nowrap;font-size:11.9px;color:#333;font-weight:normal;-webkit-text-stroke:0.3px #333">3</div>
<div style="position:absolute;left:102.5px;width:600px;text-align:center;top:204.68px;height:0;line-height:0;white-space:nowrap;font-size:11.9px;color:#333;font-weight:normal;-webkit-text-stroke:0.3px #333">4</div>
<div style="position:absolute;left:268.0px;width:600px;text-align:center;top:204.68px;height:0;line-height:0;white-space:nowrap;font-size:11.9px;color:#333;font-weight:normal;-webkit-text-stroke:0.3px #333">5</div>
<div style="position:absolute;left:399.0px;width:600px;text-align:center;top:204.68px;height:0;line-height:0;white-space:nowrap;font-size:11.9px;color:#217346;font-weight:normal;-webkit-text-stroke:0.3px #217346">6</div>
<div style="position:absolute;left:468.0px;width:600px;text-align:center;top:204.68px;height:0;line-height:0;white-space:nowrap;font-size:11.9px;color:#333;font-weight:normal;-webkit-text-stroke:0.3px #333">7</div>
<div style="position:absolute;left:559.0px;width:600px;text-align:center;top:204.68px;height:0;line-height:0;white-space:nowrap;font-size:11.9px;color:#333;font-weight:normal;-webkit-text-stroke:0.3px #333">8</div>
<div style="position:absolute;left:642.5px;width:600px;text-align:center;top:204.68px;height:0;line-height:0;white-space:nowrap;font-size:11.9px;color:#333;font-weight:normal;-webkit-text-stroke:0.3px #333">20</div>
<div style="position:absolute;left:700.5px;width:600px;text-align:center;top:204.68px;height:0;line-height:0;white-space:nowrap;font-size:11.9px;color:#333;font-weight:normal;-webkit-text-stroke:0.3px #333">21</div>
<div style="position:absolute;left:758.5px;width:600px;text-align:center;top:204.68px;height:0;line-height:0;white-space:nowrap;font-size:11.9px;color:#333;font-weight:normal;-webkit-text-stroke:0.3px #333">22</div>
<div style="position:absolute;left:816.5px;width:600px;text-align:center;top:204.68px;height:0;line-height:0;white-space:nowrap;font-size:11.9px;color:#333;font-weight:normal;-webkit-text-stroke:0.3px #333">23</div>
<div style="position:absolute;left:874.5px;width:600px;text-align:center;top:204.68px;height:0;line-height:0;white-space:nowrap;font-size:11.9px;color:#333;font-weight:normal;-webkit-text-stroke:0.3px #333">24</div>
<div style="position:absolute;left:0px;top:211px;width:1211px;height:1px;background:#b1b1b1"></div>
<div style="position:absolute;left:667px;top:210px;width:64px;height:2px;background:#217346"></div>
<div style="position:absolute;left:26px;top:212px;width:1184px;height:689px;background:#fff"></div>
<div style="position:absolute;left:0px;top:479px;width:25px;height:21px;background:#d2d2d2"></div>
<div style="position:absolute;left:23px;top:479px;width:2px;height:22px;background:#217346"></div>
<div style="position:absolute;left:26px;top:236px;width:1184px;height:1px;background:#d9d9d9"></div>
<div style="position:absolute;left:0px;top:236px;width:25px;height:1px;background:#bcbcbc"></div>
<div style="position:absolute;left:26px;top:258px;width:1184px;height:1px;background:#d9d9d9"></div>
<div style="position:absolute;left:0px;top:258px;width:25px;height:1px;background:#bcbcbc"></div>
<div style="position:absolute;left:26px;top:280px;width:1184px;height:1px;background:#d9d9d9"></div>
<div style="position:absolute;left:0px;top:280px;width:25px;height:1px;background:#bcbcbc"></div>
<div style="position:absolute;left:26px;top:302px;width:1184px;height:1px;background:#d9d9d9"></div>
<div style="position:absolute;left:0px;top:302px;width:25px;height:1px;background:#bcbcbc"></div>
<div style="position:absolute;left:26px;top:324px;width:1184px;height:1px;background:#d9d9d9"></div>
<div style="position:absolute;left:0px;top:324px;width:25px;height:1px;background:#bcbcbc"></div>
<div style="position:absolute;left:26px;top:346px;width:1184px;height:1px;background:#d9d9d9"></div>
<div style="position:absolute;left:0px;top:346px;width:25px;height:1px;background:#bcbcbc"></div>
<div style="position:absolute;left:26px;top:368px;width:1184px;height:1px;background:#d9d9d9"></div>
<div style="position:absolute;left:0px;top:368px;width:25px;height:1px;background:#bcbcbc"></div>
<div style="position:absolute;left:26px;top:390px;width:1184px;height:1px;background:#d9d9d9"></div>
<div style="position:absolute;left:0px;top:388px;width:25px;height:1px;background:#bcbcbc"></div>
<div style="position:absolute;left:0px;top:392px;width:25px;height:1px;background:#bcbcbc"></div>
<div style="position:absolute;left:26px;top:412px;width:1184px;height:1px;background:#d9d9d9"></div>
<div style="position:absolute;left:0px;top:412px;width:25px;height:1px;background:#bcbcbc"></div>
<div style="position:absolute;left:26px;top:434px;width:1184px;height:1px;background:#d9d9d9"></div>
<div style="position:absolute;left:0px;top:434px;width:25px;height:1px;background:#bcbcbc"></div>
<div style="position:absolute;left:26px;top:456px;width:1184px;height:1px;background:#d9d9d9"></div>
<div style="position:absolute;left:0px;top:456px;width:25px;height:1px;background:#bcbcbc"></div>
<div style="position:absolute;left:26px;top:478px;width:1184px;height:1px;background:#d9d9d9"></div>
<div style="position:absolute;left:0px;top:478px;width:25px;height:1px;background:#bcbcbc"></div>
<div style="position:absolute;left:26px;top:500px;width:1184px;height:1px;background:#d9d9d9"></div>
<div style="position:absolute;left:0px;top:500px;width:25px;height:1px;background:#bcbcbc"></div>
<div style="position:absolute;left:26px;top:522px;width:1184px;height:1px;background:#d9d9d9"></div>
<div style="position:absolute;left:0px;top:522px;width:25px;height:1px;background:#bcbcbc"></div>
<div style="position:absolute;left:26px;top:544px;width:1184px;height:1px;background:#d9d9d9"></div>
<div style="position:absolute;left:0px;top:544px;width:25px;height:1px;background:#bcbcbc"></div>
<div style="position:absolute;left:26px;top:566px;width:1184px;height:1px;background:#d9d9d9"></div>
<div style="position:absolute;left:0px;top:564px;width:25px;height:1px;background:#bcbcbc"></div>
<div style="position:absolute;left:0px;top:568px;width:25px;height:1px;background:#bcbcbc"></div>
<div style="position:absolute;left:26px;top:588px;width:1184px;height:1px;background:#d9d9d9"></div>
<div style="position:absolute;left:0px;top:588px;width:25px;height:1px;background:#bcbcbc"></div>
<div style="position:absolute;left:26px;top:610px;width:1184px;height:1px;background:#d9d9d9"></div>
<div style="position:absolute;left:0px;top:610px;width:25px;height:1px;background:#bcbcbc"></div>
<div style="position:absolute;left:26px;top:677px;width:1184px;height:1px;background:#d9d9d9"></div>
<div style="position:absolute;left:0px;top:677px;width:25px;height:1px;background:#bcbcbc"></div>
<div style="position:absolute;left:26px;top:704px;width:1184px;height:1px;background:#d9d9d9"></div>
<div style="position:absolute;left:0px;top:702px;width:25px;height:1px;background:#bcbcbc"></div>
<div style="position:absolute;left:0px;top:706px;width:25px;height:1px;background:#bcbcbc"></div>
<div style="position:absolute;left:26px;top:724px;width:1184px;height:1px;background:#d9d9d9"></div>
<div style="position:absolute;left:0px;top:724px;width:25px;height:1px;background:#bcbcbc"></div>
<div style="position:absolute;left:26px;top:746px;width:1184px;height:1px;background:#d9d9d9"></div>
<div style="position:absolute;left:0px;top:746px;width:25px;height:1px;background:#bcbcbc"></div>
<div style="position:absolute;left:26px;top:774px;width:1184px;height:1px;background:#d9d9d9"></div>
<div style="position:absolute;left:0px;top:774px;width:25px;height:1px;background:#bcbcbc"></div>
<div style="position:absolute;left:26px;top:799px;width:1184px;height:1px;background:#d9d9d9"></div>
<div style="position:absolute;left:0px;top:799px;width:25px;height:1px;background:#bcbcbc"></div>
<div style="position:absolute;left:26px;top:824px;width:1184px;height:1px;background:#d9d9d9"></div>
<div style="position:absolute;left:0px;top:824px;width:25px;height:1px;background:#bcbcbc"></div>
<div style="position:absolute;left:26px;top:849px;width:1184px;height:1px;background:#d9d9d9"></div>
<div style="position:absolute;left:0px;top:849px;width:25px;height:1px;background:#bcbcbc"></div>
<div style="position:absolute;left:26px;top:874px;width:1184px;height:1px;background:#d9d9d9"></div>
<div style="position:absolute;left:0px;top:874px;width:25px;height:1px;background:#bcbcbc"></div>
<div style="position:absolute;left:26px;top:899px;width:1184px;height:1px;background:#d9d9d9"></div>
<div style="position:absolute;left:0px;top:899px;width:25px;height:1px;background:#bcbcbc"></div>
<div style="position:absolute;left:61px;top:212px;width:1px;height:689px;background:#d9d9d9"></div>
<div style="position:absolute;left:201px;top:212px;width:1px;height:689px;background:#d9d9d9"></div>
<div style="position:absolute;left:335px;top:212px;width:1px;height:689px;background:#d9d9d9"></div>
<div style="position:absolute;left:469px;top:212px;width:1px;height:689px;background:#d9d9d9"></div>
<div style="position:absolute;left:666px;top:212px;width:1px;height:689px;background:#d9d9d9"></div>
<div style="position:absolute;left:731px;top:212px;width:1px;height:689px;background:#d9d9d9"></div>
<div style="position:absolute;left:804px;top:212px;width:1px;height:689px;background:#d9d9d9"></div>
<div style="position:absolute;left:913px;top:212px;width:1px;height:689px;background:#d9d9d9"></div>
<div style="position:absolute;left:971px;top:212px;width:1px;height:689px;background:#d9d9d9"></div>
<div style="position:absolute;left:1029px;top:212px;width:1px;height:689px;background:#d9d9d9"></div>
<div style="position:absolute;left:1087px;top:212px;width:1px;height:689px;background:#d9d9d9"></div>
<div style="position:absolute;left:1145px;top:212px;width:1px;height:689px;background:#d9d9d9"></div>
<div style="position:absolute;left:1203px;top:212px;width:1px;height:689px;background:#d9d9d9"></div>
<div style="position:absolute;left:25px;top:195px;width:1px;height:706px;background:#b1b1b1"></div>
<div style="position:absolute;left:1210px;top:211px;width:1px;height:691px;background:#b1b1b1"></div>
<div style="position:absolute;left:-287.4px;width:600px;text-align:center;top:227.28px;height:0;line-height:0;white-space:nowrap;font-size:11.3px;color:#333;font-weight:normal;-webkit-text-stroke:0.3px #333">1</div>
<div style="position:absolute;left:-287.4px;width:600px;text-align:center;top:251.28px;height:0;line-height:0;white-space:nowrap;font-size:11.3px;color:#333;font-weight:normal;-webkit-text-stroke:0.3px #333">2</div>
<div style="position:absolute;left:-287.4px;width:600px;text-align:center;top:273.28px;height:0;line-height:0;white-space:nowrap;font-size:11.3px;color:#333;font-weight:normal;-webkit-text-stroke:0.3px #333">3</div>
<div style="position:absolute;left:-287.4px;width:600px;text-align:center;top:295.28px;height:0;line-height:0;white-space:nowrap;font-size:11.3px;color:#333;font-weight:normal;-webkit-text-stroke:0.3px #333">4</div>
<div style="position:absolute;left:-287.4px;width:600px;text-align:center;top:317.28px;height:0;line-height:0;white-space:nowrap;font-size:11.3px;color:#333;font-weight:normal;-webkit-text-stroke:0.3px #333">5</div>
<div style="position:absolute;left:-287.4px;width:600px;text-align:center;top:339.28px;height:0;line-height:0;white-space:nowrap;font-size:11.3px;color:#333;font-weight:normal;-webkit-text-stroke:0.3px #333">6</div>
<div style="position:absolute;left:-287.4px;width:600px;text-align:center;top:361.28px;height:0;line-height:0;white-space:nowrap;font-size:11.3px;color:#333;font-weight:normal;-webkit-text-stroke:0.3px #333">7</div>
<div style="position:absolute;left:-287.4px;width:600px;text-align:center;top:383.28px;height:0;line-height:0;white-space:nowrap;font-size:11.3px;color:#333;font-weight:normal;-webkit-text-stroke:0.3px #333">8</div>
<div style="position:absolute;left:-287.4px;width:600px;text-align:center;top:405.28px;height:0;line-height:0;white-space:nowrap;font-size:11.3px;color:#333;font-weight:normal;-webkit-text-stroke:0.3px #333">13</div>
<div style="position:absolute;left:-287.4px;width:600px;text-align:center;top:427.28px;height:0;line-height:0;white-space:nowrap;font-size:11.3px;color:#333;font-weight:normal;-webkit-text-stroke:0.3px #333">14</div>
<div style="position:absolute;left:-287.4px;width:600px;text-align:center;top:449.28px;height:0;line-height:0;white-space:nowrap;font-size:11.3px;color:#333;font-weight:normal;-webkit-text-stroke:0.3px #333">15</div>
<div style="position:absolute;left:-287.4px;width:600px;text-align:center;top:471.28px;height:0;line-height:0;white-space:nowrap;font-size:11.3px;color:#333;font-weight:normal;-webkit-text-stroke:0.3px #333">16</div>
<div style="position:absolute;left:-287.4px;width:600px;text-align:center;top:493.28px;height:0;line-height:0;white-space:nowrap;font-size:11.3px;color:#217346;font-weight:normal;-webkit-text-stroke:0.3px #217346">17</div>
<div style="position:absolute;left:-287.4px;width:600px;text-align:center;top:515.28px;height:0;line-height:0;white-space:nowrap;font-size:11.3px;color:#333;font-weight:normal;-webkit-text-stroke:0.3px #333">18</div>
<div style="position:absolute;left:-287.4px;width:600px;text-align:center;top:537.28px;height:0;line-height:0;white-space:nowrap;font-size:11.3px;color:#333;font-weight:normal;-webkit-text-stroke:0.3px #333">19</div>
<div style="position:absolute;left:-287.4px;width:600px;text-align:center;top:559.28px;height:0;line-height:0;white-space:nowrap;font-size:11.3px;color:#333;font-weight:normal;-webkit-text-stroke:0.3px #333">20</div>
<div style="position:absolute;left:-287.4px;width:600px;text-align:center;top:581.28px;height:0;line-height:0;white-space:nowrap;font-size:11.3px;color:#333;font-weight:normal;-webkit-text-stroke:0.3px #333">24</div>
<div style="position:absolute;left:-287.4px;width:600px;text-align:center;top:603.28px;height:0;line-height:0;white-space:nowrap;font-size:11.3px;color:#333;font-weight:normal;-webkit-text-stroke:0.3px #333">25</div>
<div style="position:absolute;left:-287.4px;width:600px;text-align:center;top:669.78px;height:0;line-height:0;white-space:nowrap;font-size:11.3px;color:#333;font-weight:normal;-webkit-text-stroke:0.3px #333">26</div>
<div style="position:absolute;left:-287.4px;width:600px;text-align:center;top:696.58px;height:0;line-height:0;white-space:nowrap;font-size:11.3px;color:#333;font-weight:normal;-webkit-text-stroke:0.3px #333">27</div>
<div style="position:absolute;left:-287.4px;width:600px;text-align:center;top:717.48px;height:0;line-height:0;white-space:nowrap;font-size:11.3px;color:#333;font-weight:normal;-webkit-text-stroke:0.3px #333">36</div>
<div style="position:absolute;left:-287.4px;width:600px;text-align:center;top:739.28px;height:0;line-height:0;white-space:nowrap;font-size:11.3px;color:#333;font-weight:normal;-webkit-text-stroke:0.3px #333">37</div>
<div style="position:absolute;left:-287.4px;width:600px;text-align:center;top:765.78px;height:0;line-height:0;white-space:nowrap;font-size:11.3px;color:#333;font-weight:normal;-webkit-text-stroke:0.3px #333">38</div>
<div style="position:absolute;left:-287.4px;width:600px;text-align:center;top:790.28px;height:0;line-height:0;white-space:nowrap;font-size:11.3px;color:#333;font-weight:normal;-webkit-text-stroke:0.3px #333">39</div>
<div style="position:absolute;left:-287.4px;width:600px;text-align:center;top:815.28px;height:0;line-height:0;white-space:nowrap;font-size:11.3px;color:#333;font-weight:normal;-webkit-text-stroke:0.3px #333">40</div>
<div style="position:absolute;left:-287.4px;width:600px;text-align:center;top:840.28px;height:0;line-height:0;white-space:nowrap;font-size:11.3px;color:#333;font-weight:normal;-webkit-text-stroke:0.3px #333">41</div>
<div style="position:absolute;left:-287.4px;width:600px;text-align:center;top:865.28px;height:0;line-height:0;white-space:nowrap;font-size:11.3px;color:#333;font-weight:normal;-webkit-text-stroke:0.3px #333">42</div>
<div style="position:absolute;left:-287.4px;width:600px;text-align:center;top:890.08px;height:0;line-height:0;white-space:nowrap;font-size:11.3px;color:#333;font-weight:normal;-webkit-text-stroke:0.3px #333">43</div>
<div style="position:absolute;left:62px;top:237px;width:604px;height:21px;background:#fff"></div>
<div style="position:absolute;left:62px;top:281px;width:604px;height:21px;background:#fff"></div>
<div style="position:absolute;left:62px;top:303px;width:273px;height:21px;background:#fff"></div>
<div style="position:absolute;left:62px;top:347px;width:604px;height:21px;background:#fff"></div>
<div style="position:absolute;left:62px;top:391px;width:407px;height:21px;background:#fff"></div>
<div style="position:absolute;left:62px;top:435px;width:604px;height:21px;background:#fff"></div>
<div style="position:absolute;left:62px;top:479px;width:407px;height:21px;background:#fff"></div>
<div style="position:absolute;left:62px;top:523px;width:604px;height:21px;background:#fff"></div>
<div style="position:absolute;left:62px;top:567px;width:407px;height:21px;background:#fff"></div>
<div style="position:absolute;left:62px;top:747px;width:604px;height:27px;background:#fff"></div>
<div style="position:absolute;left:-542.5px;width:600px;text-align:right;top:249.38px;height:0;line-height:0;white-space:nowrap;font-size:16.8px;color:#0070c0;font-weight:bold;">1.</div>
<div style="position:absolute;left:65px;top:249.38px;height:0;line-height:0;white-space:nowrap;font-size:16.8px;color:#000;font-weight:bold;">Количество точек водоразбора (используют одновременно),&nbsp; шт.</div>
<div style="position:absolute;left:-542.5px;width:600px;text-align:right;top:293.38px;height:0;line-height:0;white-space:nowrap;font-size:16.8px;color:#0070c0;font-weight:bold;">2.</div>
<div style="position:absolute;left:65px;top:293.38px;height:0;line-height:0;white-space:nowrap;font-size:16.8px;color:#000;font-weight:bold;">Расстояние от земли до самой верхней точки водоразбора, м.</div>
<div style="position:absolute;left:-542.5px;width:600px;text-align:right;top:359.38px;height:0;line-height:0;white-space:nowrap;font-size:16.8px;color:#0070c0;font-weight:bold;">3.</div>
<div style="position:absolute;left:65px;top:359.38px;height:0;line-height:0;white-space:nowrap;font-size:16.8px;color:#000;font-weight:bold;">Уровень погружения насоса от поверхности земли, м.</div>
<div style="position:absolute;left:-542.5px;width:600px;text-align:right;top:403.38px;height:0;line-height:0;white-space:nowrap;font-size:16.8px;color:#0070c0;font-weight:bold;">4.</div>
<div style="position:absolute;left:65px;top:403.38px;height:0;line-height:0;white-space:nowrap;font-size:16.8px;color:#000;font-weight:bold;">Длина горизонтального трубопровода, м.</div>
<div style="position:absolute;left:-542.5px;width:600px;text-align:right;top:447.38px;height:0;line-height:0;white-space:nowrap;font-size:16.8px;color:#0070c0;font-weight:bold;">5.</div>
<div style="position:absolute;left:65px;top:447.38px;height:0;line-height:0;white-space:nowrap;font-size:16.8px;color:#000;font-weight:bold;">Количество отводов (углов) в трубопроводе, шт.</div>
<div style="position:absolute;left:-542.5px;width:600px;text-align:right;top:491.38px;height:0;line-height:0;white-space:nowrap;font-size:16.8px;color:#0070c0;font-weight:bold;">6.</div>
<div style="position:absolute;left:65px;top:491.38px;height:0;line-height:0;white-space:nowrap;font-size:16.8px;color:#000;font-weight:bold;">Количество обратных клапанов, фильтров,&nbsp; шт.</div>
<div style="position:absolute;left:-542.5px;width:600px;text-align:right;top:535.38px;height:0;line-height:0;white-space:nowrap;font-size:16.8px;color:#0070c0;font-weight:bold;">7.</div>
<div style="position:absolute;left:65px;top:535.38px;height:0;line-height:0;white-space:nowrap;font-size:16.8px;color:#000;font-weight:bold;">Давление в сети (постоянное, при включении кранов), атм.</div>
<div style="position:absolute;left:-542.5px;width:600px;text-align:right;top:579.38px;height:0;line-height:0;white-space:nowrap;font-size:16.8px;color:#0070c0;font-weight:bold;">8.</div>
<div style="position:absolute;left:65px;top:579.38px;height:0;line-height:0;white-space:nowrap;font-size:16.8px;color:#000;font-weight:bold;">Необходимый напор, (м. вод. ст.)</div>
<div style="position:absolute;left:63.5px;top:315.61px;height:0;line-height:0;white-space:nowrap;font-size:14.4px;color:#000;font-weight:bold;">(например, лейка душа на 2 этаже)</div>
<div style="position:absolute;left:666px;top:236px;width:66px;height:23px;background:#fff;border-left:1px solid #333;border-right:1px solid #333;border-top:2px solid #6a6a6a;border-bottom:2px solid #6a6a6a"></div>
<div style="position:absolute;left:399px;width:600px;text-align:center;top:248.98px;height:0;line-height:0;white-space:nowrap;font-size:16.8px;color:#000;font-weight:bold;">3</div>
<div style="position:absolute;left:666px;top:280px;width:66px;height:23px;background:#fff;border-left:1px solid #333;border-right:1px solid #333;border-top:2px solid #6a6a6a;border-bottom:2px solid #6a6a6a"></div>
<div style="position:absolute;left:399px;width:600px;text-align:center;top:292.98px;height:0;line-height:0;white-space:nowrap;font-size:16.8px;color:#000;font-weight:bold;">3</div>
<div style="position:absolute;left:666px;top:346px;width:66px;height:23px;background:#fff;border-left:1px solid #333;border-right:1px solid #333;border-top:2px solid #6a6a6a;border-bottom:2px solid #6a6a6a"></div>
<div style="position:absolute;left:399px;width:600px;text-align:center;top:358.98px;height:0;line-height:0;white-space:nowrap;font-size:16.8px;color:#000;font-weight:bold;">20</div>
<div style="position:absolute;left:666px;top:390px;width:66px;height:23px;background:#fff;border-left:1px solid #333;border-right:1px solid #333;border-top:2px solid #6a6a6a;border-bottom:2px solid #6a6a6a"></div>
<div style="position:absolute;left:399px;width:600px;text-align:center;top:402.98px;height:0;line-height:0;white-space:nowrap;font-size:16.8px;color:#000;font-weight:bold;">8</div>
<div style="position:absolute;left:666px;top:434px;width:66px;height:23px;background:#fff;border-left:1px solid #333;border-right:1px solid #333;border-top:2px solid #6a6a6a;border-bottom:2px solid #6a6a6a"></div>
<div style="position:absolute;left:399px;width:600px;text-align:center;top:446.98px;height:0;line-height:0;white-space:nowrap;font-size:16.8px;color:#000;font-weight:bold;">8</div>
<div style="position:absolute;left:666px;top:479px;width:66px;height:22px;background:#fff"></div>
<div style="position:absolute;left:399px;width:600px;text-align:center;top:490.98px;height:0;line-height:0;white-space:nowrap;font-size:16.8px;color:#000;font-weight:bold;">2</div>
<div style="position:absolute;left:666px;top:522px;width:66px;height:23px;background:#0070c0;border:1px solid #222"></div>
<div style="position:absolute;left:399.20000000000005px;width:600px;text-align:center;top:535.48px;height:0;line-height:0;white-space:nowrap;font-size:16.8px;color:#fff;font-weight:bold;">3</div>
<div style="position:absolute;left:666px;top:566px;width:66px;height:23px;background:#0070c0;border:1px solid #222"></div>
<div style="position:absolute;left:399px;width:600px;text-align:center;top:579.48px;height:0;line-height:0;white-space:nowrap;font-size:16.8px;color:#fff;font-weight:bold;">69,8</div>
<div style="position:absolute;left:665px;top:478px;width:68px;height:24px;border:2px solid #217346"></div>
<div style="position:absolute;left:728px;top:498px;width:7px;height:7px;background:#217346;border:1px solid #fff"></div>
<div style="position:absolute;left:201px;top:610px;width:466px;height:68px;background:#0070c0"></div>
<div style="position:absolute;left:201px;top:677px;width:466px;height:28px;background:#fff"></div>
<div style="position:absolute;left:470px;top:678px;width:196px;height:26px;background:#dce6f1"></div>
<div style="position:absolute;left:201px;top:610px;width:1px;height:95px;background:#222"></div>
<div style="position:absolute;left:335px;top:610px;width:1px;height:95px;background:#222"></div>
<div style="position:absolute;left:469px;top:610px;width:1px;height:95px;background:#222"></div>
<div style="position:absolute;left:666px;top:610px;width:1px;height:95px;background:#222"></div>
<div style="position:absolute;left:201px;top:610px;width:466px;height:1px;background:#222"></div>
<div style="position:absolute;left:201px;top:677px;width:466px;height:1px;background:#222"></div>
<div style="position:absolute;left:201px;top:704px;width:466px;height:1px;background:#222"></div>
<div style="position:absolute;left:239.75px;top:634.48px;height:0;line-height:0;white-space:nowrap;font-size:16.8px;color:#fff;font-weight:bold;transform:scaleX(0.9461);transform-origin:0 0">МАРКА</div>
<div style="position:absolute;left:-32px;width:600px;text-align:center;top:656.68px;height:0;line-height:0;white-space:nowrap;font-size:16.8px;color:#fff;font-weight:bold;">насоса</div>
<div style="position:absolute;left:365.95px;top:634.48px;height:0;line-height:0;white-space:nowrap;font-size:16.8px;color:#fff;font-weight:bold;transform:scaleX(0.9813);transform-origin:0 0">МОДЕЛЬ</div>
<div style="position:absolute;left:102px;width:600px;text-align:center;top:656.68px;height:0;line-height:0;white-space:nowrap;font-size:16.8px;color:#fff;font-weight:bold;">насоса</div>
<div style="position:absolute;left:267.5px;width:600px;text-align:center;top:622.98px;height:0;line-height:0;white-space:nowrap;font-size:16.8px;color:#fff;font-weight:bold;">Номинальная</div>
<div style="position:absolute;left:477.95px;top:645.18px;height:0;line-height:0;white-space:nowrap;font-size:16.8px;color:#fff;font-weight:bold;transform:scaleX(0.9818);transform-origin:0 0">производительность,</div>
<div style="position:absolute;left:267.5px;width:600px;text-align:center;top:667.68px;height:0;line-height:0;white-space:nowrap;font-size:16.8px;color:#fff;font-weight:bold;">л./мин.</div>
<div style="position:absolute;left:-32px;width:600px;text-align:center;top:692.38px;height:0;line-height:0;white-space:nowrap;font-size:16.8px;color:#0070c0;font-weight:bold;">БЦП 3,5-0,5</div>
<div style="position:absolute;left:102.5px;width:600px;text-align:center;top:692.38px;height:0;line-height:0;white-space:nowrap;font-size:16.8px;color:#0070c0;font-weight:bold;">БЦП 3,5 0,5-65</div>
<div style="position:absolute;left:267.5px;width:600px;text-align:center;top:693.98px;height:0;line-height:0;white-space:nowrap;font-size:16.8px;color:#0070c0;font-weight:bold;">30</div>
<div style="position:absolute;left:65.5px;top:694.38px;height:0;line-height:0;white-space:nowrap;font-size:16.8px;color:#0070c0;font-weight:bold;">Насос, марка:</div>
<div style="position:absolute;left:65.5px;top:761.32px;height:0;line-height:0;white-space:nowrap;font-size:21.6px;color:#0070c0;font-weight:bold;">Выбрать насос в каталоге: https://clck.ru/35oBUf</div>
<div style="position:absolute;left:1214px;top:197px;width:15px;height:16px;background:#fff;border:1px solid #bcbcbc"></div>
<svg style="position:absolute;left:1217px;top:201px;" width="9" height="6" viewBox="0 0 9 6"><path d="M0.5 5.5L4.5 1l4 4.5z" fill="#6a6a6a"/></svg>
<div style="position:absolute;left:1214px;top:212px;width:15px;height:660px;background:#fff;border:1px solid #bcbcbc"></div>
<div style="position:absolute;left:1215px;top:871px;width:13px;height:17px;background:#dbdbdb"></div>
<div style="position:absolute;left:1214px;top:887px;width:15px;height:15px;background:#fff;border:1px solid #dadada"></div>
<svg style="position:absolute;left:1217px;top:892px;" width="9" height="6" viewBox="0 0 9 6"><path d="M0.5 0.5h8L4.5 5z" fill="#6a6a6a"/></svg>
<div style="position:absolute;left:0px;top:901px;width:1232px;height:29px;background:#e6e6e6;border-bottom:1px solid #d4d4d4"></div>
<div style="position:absolute;left:0px;top:900px;width:26px;height:1px;background:#e6e6e6"></div>
<div style="position:absolute;left:26px;top:900px;width:1185px;height:1px;background:#fbfbfb"></div>
<div style="position:absolute;left:0px;top:901px;width:1211px;height:2px;background:#c6c6c6"></div>
<svg style="position:absolute;left:26px;top:911px;" width="6" height="9" viewBox="0 0 6 9"><path d="M5 0.5v8L0.5 4.5z" fill="#c3c3c3"/></svg>
<svg style="position:absolute;left:55px;top:911px;" width="6" height="9" viewBox="0 0 6 9"><path d="M0.5 0.5v8L5 4.5z" fill="#c3c3c3"/></svg>
<div style="position:absolute;left:100px;top:901px;width:61px;height:25px;background:linear-gradient(#ffffff 0%,#f4fbfe 15%,#98d9f5 100%);border-left:1px solid #fff;border-right:1px solid #c9c9c9;"></div>
<div style="position:absolute;left:100px;top:924px;width:61px;height:2px;background:#217346"></div>
<div style="position:absolute;left:112px;top:914.91px;height:0;line-height:0;white-space:nowrap;font-size:12.38px;color:#217346;font-weight:bold;">Насос</div>
<svg style="position:absolute;left:192px;top:906px;" width="19" height="19" viewBox="0 0 19 19"><circle cx="9.5" cy="9.5" r="7.8" fill="none" stroke="#8d8d8d" stroke-width="1.3"/><path d="M9.5 5v9M5 9.5h9" stroke="#6d6d6d" stroke-width="1.8"/></svg>
<div style="position:absolute;left:618px;top:910px;width:2px;height:2px;background:#a0a0a0;border-radius:1px"></div>
<div style="position:absolute;left:618px;top:914.5px;width:2px;height:2px;background:#a0a0a0;border-radius:1px"></div>
<div style="position:absolute;left:618px;top:919px;width:2px;height:2px;background:#a0a0a0;border-radius:1px"></div>
<div style="position:absolute;left:635px;top:908px;width:16px;height:16px;background:#fff;border:1px solid #c6c6c6"></div>
<svg style="position:absolute;left:639px;top:911px;" width="6" height="9" viewBox="0 0 6 9"><path d="M5 0.5v8L0.5 4.5z" fill="#6a6a6a"/></svg>
<div style="position:absolute;left:650px;top:908px;width:523px;height:16px;background:#fff;border:1px solid #c6c6c6"></div>
<div style="position:absolute;left:1173px;top:909px;width:23px;height:14px;background:#dbdbdb"></div>
<div style="position:absolute;left:1196px;top:908px;width:15px;height:16px;background:#fff;border:1px solid #d4d4d4"></div>
<svg style="position:absolute;left:1201px;top:911px;" width="6" height="9" viewBox="0 0 6 9"><path d="M0.5 0.5v8L5 4.5z" fill="#6a6a6a"/></svg>
<div style="position:absolute;left:0px;top:929px;width:1232px;height:2px;background:#d2d2d2"></div>
<div style="position:absolute;left:0px;top:931px;width:1232px;height:20px;background:#f1f1f1"></div>
<div style="position:absolute;left:7.5px;top:939.98px;height:0;line-height:0;white-space:nowrap;font-size:11.6px;color:#444;font-weight:normal;transform:scaleX(0.9939);transform-origin:0 0;">Готово</div>
<div style="position:absolute;left:935px;top:930px;width:38px;height:21px;background:#c8c8c8"></div>
<svg style="position:absolute;left:946px;top:933px;" width="15" height="14" viewBox="0 0 15 14"><rect x="0.75" y="0.75" width="13" height="12.5" rx="1" fill="none" stroke="#6d6d6d" stroke-width="1.4"/><path d="M5.1 0.75v12.5M9.4 0.75v12.5M0.75 4.9h13M0.75 9.1h13" stroke="#6d6d6d" stroke-width="1.2"/></svg>
<svg style="position:absolute;left:984px;top:933px;" width="16" height="14" viewBox="0 0 16 14"><rect x="1.2" y="0.9" width="13.2" height="12.4" rx="1" fill="none" stroke="#7a7a7a" stroke-width="1.3"/><rect x="4.3" y="3" width="7.2" height="8.2" rx="0.5" fill="none" stroke="#7a7a7a" stroke-width="1.1"/><path d="M5.8 5h4.2M5.8 7h4.2M5.8 9h4.2" stroke="#a0a0a0" stroke-width="0.9"/></svg>
<svg style="position:absolute;left:1022px;top:933px;" width="16" height="14" viewBox="0 0 16 14"><rect x="1.2" y="0.9" width="13.2" height="12.4" rx="1" fill="none" stroke="#7a7a7a" stroke-width="1.3"/><path d="M1.2 7.5H9.2V0.9M5.2 0.9V7.5" fill="none" stroke="#7a7a7a" stroke-width="1.2"/></svg>
<div style="position:absolute;left:1054px;top:939px;width:6px;height:2px;background:#555"></div>
<div style="position:absolute;left:1064px;top:939px;width:100px;height:1px;background:#b9b9b9"></div>
<div style="position:absolute;left:1107px;top:934px;width:4px;height:11px;background:#6d6d6d"></div>
<div style="position:absolute;left:1114px;top:937px;width:1px;height:6px;background:#b9b9b9"></div>
<svg style="position:absolute;left:1167px;top:935px;" width="10" height="10" viewBox="0 0 10 10"><path d="M5 0.5v9M0.5 5h9" stroke="#555" stroke-width="1.7"/></svg>
<div style="position:absolute;left:1191px;top:941.48px;height:0;line-height:0;white-space:nowrap;font-size:11.6px;color:#555;font-weight:normal;transform:scaleX(0.8938);transform-origin:0 0;">90%</div>
<div style="position:absolute;left:1231px;top:56px;width:1px;height:895px;background:#9dbfa8"></div>
</body></html>
